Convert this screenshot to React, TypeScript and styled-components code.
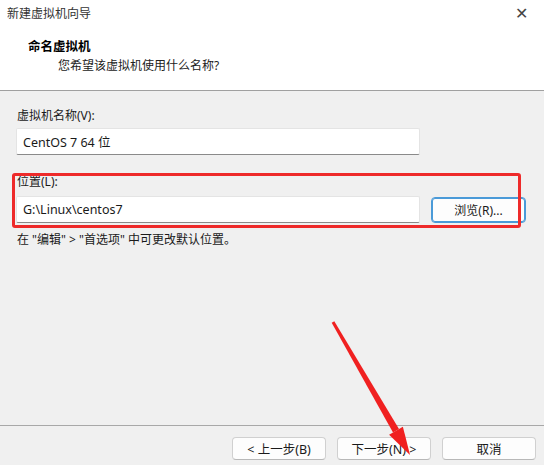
import React from 'react'
import styled, { createGlobalStyle } from 'styled-components'

const GlobalStyle = createGlobalStyle`
  html, body { margin: 0; padding: 0; }
  body {
    font-family: "Noto Sans", "Noto Sans CJK SC", sans-serif;
    font-size: 12px;
    color: #1a1a1a;
  }
`

const Window = styled.div`
  position: relative;
  width: 544px;
  height: 465px;
  display: flex;
  flex-direction: column;
  background: #f0f0f0;
  overflow: hidden;
`

const Header = styled.div`
  box-sizing: border-box;
  height: 91px;
  background: #ffffff;
  border-bottom: 1px solid #a0a0a0;
  display: flex;
  flex-direction: column;
`

const TitleBar = styled.div`
  height: 25px;
  display: flex;
  align-items: center;
  justify-content: space-between;
  padding: 0 16px 0 7px;
  font-size: 12px;
  color: #333;
`

const Close = styled.span`
  font-size: 16px;
  color: #444;
  line-height: 1;
`

const Heading = styled.div`
  margin: 13px 0 0 28px;
  font-weight: bold;
  font-size: 12.5px;
  line-height: 17px;
  color: #000;
`

const SubHeading = styled.div`
  margin: 2px 0 0 58px;
  line-height: 17px;
  color: #222;
`

const Body = styled.div`
  flex: 1;
  padding: 17px 0 0 16px;
  display: flex;
  flex-direction: column;
`

const Label = styled.div`
  padding-left: 1px;
  line-height: 16px;
  height: 17px;
  color: #1a1a1a;
`

const Input = styled.div`
  box-sizing: border-box;
  width: 404px;
  height: 27px;
  background: #ffffff;
  border: 1px solid #e4e4e4;
  border-bottom-color: #8a8a8a;
  border-radius: 2px;
  display: flex;
  align-items: center;
  padding-left: 6px;
  font-size: 12.5px;
  color: #1a1a1a;
`

const LocationGroup = styled.div`
  position: relative;
  margin-top: 19px;
`

const Row = styled.div<{ $top?: number }>`
  margin-top: ${p => p.$top ?? 3}px;
  display: flex;
  align-items: center;
  gap: 11px;
`

const Button = styled.div<{ $focus?: boolean }>`
  box-sizing: border-box;
  width: 95px;
  height: 26px;
  display: flex;
  align-items: center;
  justify-content: center;
  background: #fdfdfd;
  border: 1px solid ${p => (p.$focus ? '#4a9ad8' : '#d0d0d0')};
  box-shadow: ${p => (p.$focus ? 'inset 0 0 0 1px #4a9ad8' : 'none')};
  border-bottom-color: ${p => (p.$focus ? '#4a9ad8' : '#b8b8b8')};
  border-radius: 4px;
  color: #1a1a1a;
  font-size: 12px;
`

const Highlight = styled.div`
  box-sizing: border-box;
  position: absolute;
  left: -4px;
  top: -1px;
  width: 509px;
  height: 55px;
  border: 3px solid #ee2a2a;
  border-radius: 3px;
  pointer-events: none;
`

const Note = styled.div`
  margin-top: 9px;
  padding-left: 1px;
  line-height: 16px;
  white-space: pre;
`

const Footer = styled.div`
  box-sizing: border-box;
  height: 40px;
  border-top: 1px solid #a8a8a8;
  display: flex;
  justify-content: flex-end;
  align-items: flex-start;
  padding: 11px 8px 0 0;
  gap: 11px;
`

const FooterButton = styled(Button)`
  width: 94px;
  height: 23px;
  font-size: 12.5px;
`

const Arrow = styled.svg`
  position: absolute;
  left: 0;
  top: 0;
  pointer-events: none;
`

export default function App() {
  return (
    <Window>
      <GlobalStyle />
      <Header>
        <TitleBar>
          <span>新建虚拟机向导</span>
          <Close>✕</Close>
        </TitleBar>
        <Heading>命名虚拟机</Heading>
        <SubHeading>您希望该虚拟机使用什么名称?</SubHeading>
      </Header>

      <Body>
        <Label>虚拟机名称(V):</Label>
        <Row>
          <Input>CentOS 7 64 位</Input>
        </Row>

        <LocationGroup>
          <Label>位置(L):</Label>
          <Row $top={5}>
            <Input>G:\Linux\centos7</Input>
            <Button $focus>浏览(R)...</Button>
          </Row>
          <Highlight />
        </LocationGroup>

        <Note>在 "编辑" &gt; "首选项" 中可更改默认位置。</Note>
      </Body>

      <Footer>
        <FooterButton>&lt; 上一步(B)</FooterButton>
        <FooterButton>下一步(N) &gt;</FooterButton>
        <FooterButton>取消</FooterButton>
      </Footer>

      <Arrow width="544" height="465" viewBox="0 0 544 465">
        <polygon
          points="334.3,321.2 331.7,322.8 393,432.5 399,429.1"
          fill="#f02020"
        />
        <polygon points="410,455 402.9,426.8 389.1,434.8" fill="#f02020" />
      </Arrow>
    </Window>
  )
}
